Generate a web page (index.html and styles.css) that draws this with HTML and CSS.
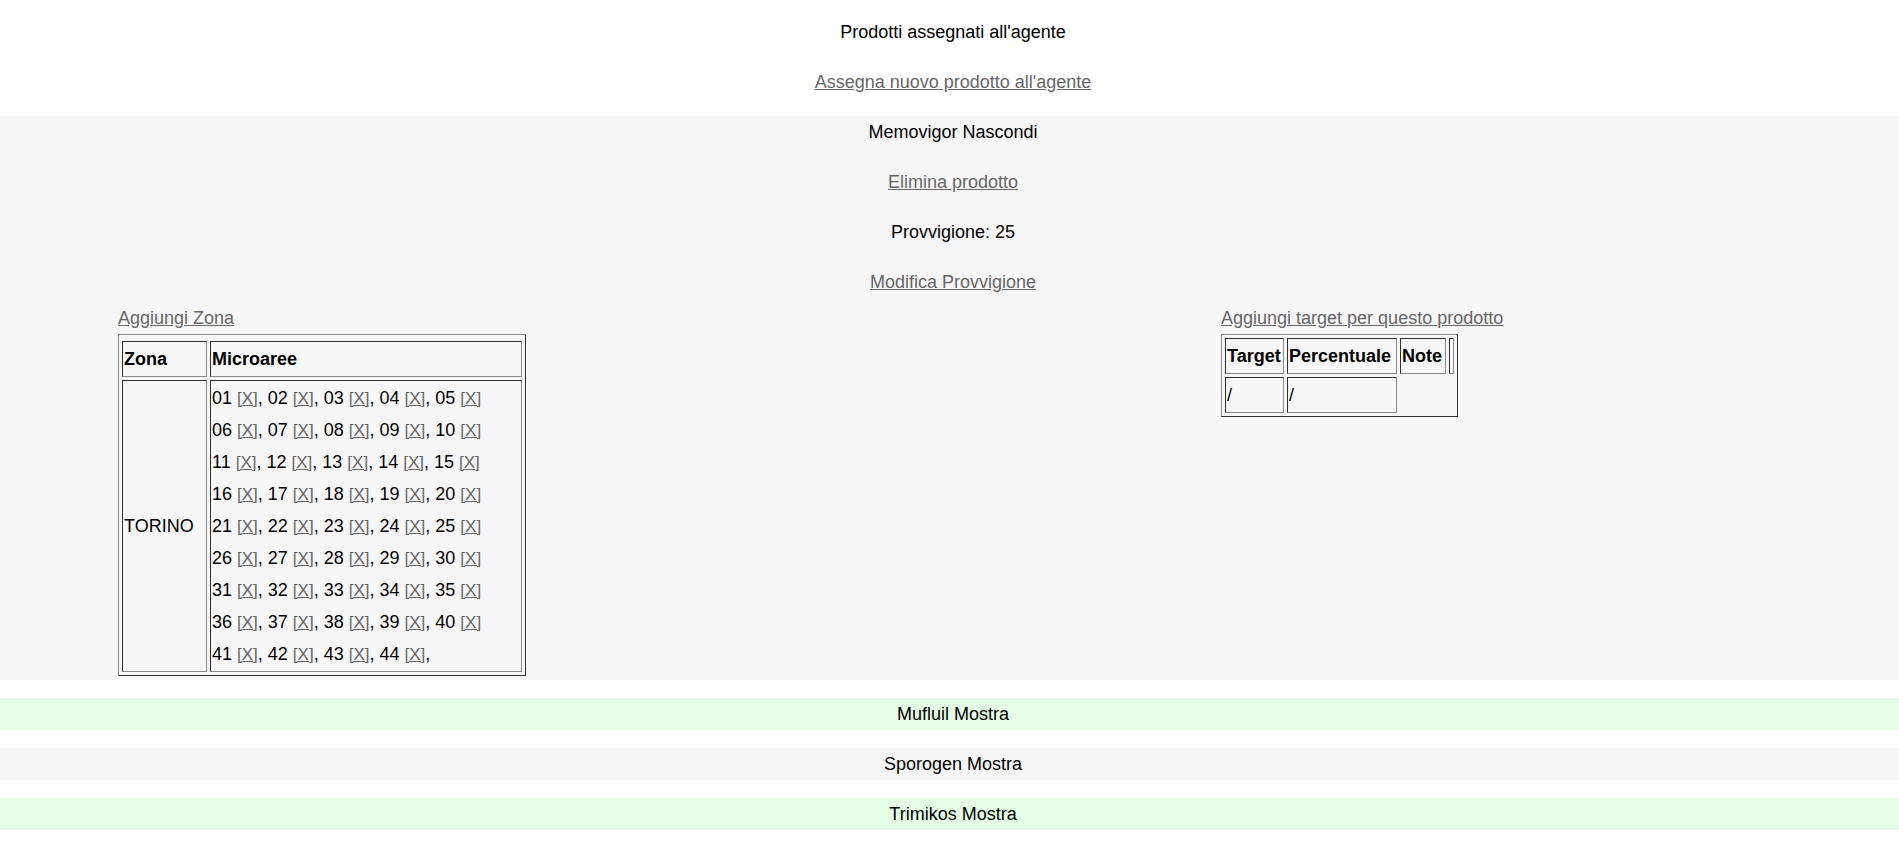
FILE: index.html
```html
<!DOCTYPE html>
<html lang="it">
<head>
<meta charset="utf-8">
<title>Prodotti assegnati all'agente</title>
<link rel="stylesheet" href="styles.css">
</head>
<body>
<div class="page">
  <p class="line first">Prodotti assegnati all'agente</p>
  <p class="line"><a href="#">Assegna nuovo prodotto all'agente</a></p>

  <section class="product open">
    <div class="title">Memovigor <span class="toggle">Nascondi</span></div>
    <div class="details">
      <p class="line"><a href="#">Elimina prodotto</a></p>
      <p class="line">Provvigione: 25</p>
      <p class="line"><a href="#">Modifica Provvigione</a></p>
      <div class="blocks">
        <div class="block-left">
          <div class="block-link"><a href="#">Aggiungi Zona</a></div>
          <table class="grid zones">
            <tr>
              <th class="c-zona">Zona</th>
              <th class="c-micro">Microaree</th>
            </tr>
            <tr>
              <td class="c-zona">TORINO</td>
              <td class="c-micro">01 <a class="del" href="#">[X]</a>, 02 <a class="del" href="#">[X]</a>, 03 <a class="del" href="#">[X]</a>, 04 <a class="del" href="#">[X]</a>, 05 <a class="del" href="#">[X]</a><br>06 <a class="del" href="#">[X]</a>, 07 <a class="del" href="#">[X]</a>, 08 <a class="del" href="#">[X]</a>, 09 <a class="del" href="#">[X]</a>, 10 <a class="del" href="#">[X]</a><br>11 <a class="del" href="#">[X]</a>, 12 <a class="del" href="#">[X]</a>, 13 <a class="del" href="#">[X]</a>, 14 <a class="del" href="#">[X]</a>, 15 <a class="del" href="#">[X]</a><br>16 <a class="del" href="#">[X]</a>, 17 <a class="del" href="#">[X]</a>, 18 <a class="del" href="#">[X]</a>, 19 <a class="del" href="#">[X]</a>, 20 <a class="del" href="#">[X]</a><br>21 <a class="del" href="#">[X]</a>, 22 <a class="del" href="#">[X]</a>, 23 <a class="del" href="#">[X]</a>, 24 <a class="del" href="#">[X]</a>, 25 <a class="del" href="#">[X]</a><br>26 <a class="del" href="#">[X]</a>, 27 <a class="del" href="#">[X]</a>, 28 <a class="del" href="#">[X]</a>, 29 <a class="del" href="#">[X]</a>, 30 <a class="del" href="#">[X]</a><br>31 <a class="del" href="#">[X]</a>, 32 <a class="del" href="#">[X]</a>, 33 <a class="del" href="#">[X]</a>, 34 <a class="del" href="#">[X]</a>, 35 <a class="del" href="#">[X]</a><br>36 <a class="del" href="#">[X]</a>, 37 <a class="del" href="#">[X]</a>, 38 <a class="del" href="#">[X]</a>, 39 <a class="del" href="#">[X]</a>, 40 <a class="del" href="#">[X]</a><br>41 <a class="del" href="#">[X]</a>, 42 <a class="del" href="#">[X]</a>, 43 <a class="del" href="#">[X]</a>, 44 <a class="del" href="#">[X]</a>,</td>
            </tr>
          </table>
        </div>
        <div class="block-right">
          <div class="block-link"><a href="#">Aggiungi target per questo prodotto</a></div>
          <table class="grid targets">
            <tr>
              <th class="t-target">Target</th>
              <th class="t-perc">Percentuale</th>
              <th class="t-note">Note</th>
              <th class="t-empty"></th>
            </tr>
            <tr>
              <td>/</td>
              <td>/</td>
            </tr>
          </table>
        </div>
      </div>
    </div>
  </section>

  <section class="product green">
    <div class="title">Mufluil <span class="toggle">Mostra</span></div>
  </section>
  <section class="product gray">
    <div class="title">Sporogen <span class="toggle">Mostra</span></div>
  </section>
  <section class="product green">
    <div class="title">Trimikos <span class="toggle">Mostra</span></div>
  </section>
</div>
</body>
</html>
```
FILE: styles.css
```css
html, body {
  margin: 0;
  padding: 0;
  background: #ffffff;
}

body {
  font-family: "Liberation Sans", Arial, sans-serif;
  font-size: 18px;
  line-height: 32px;
  color: #000000;
}

a {
  color: #666666;
  text-decoration: underline;
}

.page {
  display: flex;
  flex-direction: column;
  gap: 18px;
  padding-top: 16px;
}

.line {
  margin: 0;
  padding-left: 7px;
  text-align: center;
}

.product {
  display: flex;
  flex-direction: column;
}

.product.open,
.product.gray {
  background: #f7f7f7;
}

.product.green {
  background: #e5fde5;
}

.title {
  text-align: center;
  height: 32px;
  padding-left: 7px;
}

.toggle {
  cursor: pointer;
}

.details {
  display: flex;
  flex-direction: column;
  gap: 18px;
  padding-top: 18px;
  padding-bottom: 4px;
}

.blocks {
  display: flex;
  padding-left: 118px;
  margin-top: -14px;
}

.block-left {
  width: 1103px;
}

.block-link {
  height: 32px;
}

.grid {
  border-collapse: separate;
  border-spacing: 3px;
  border-width: 1px;
  border-style: solid;
  border-color: #8a8a8a #2e2e2e #2e2e2e #8a8a8a;
}

.grid th,
.grid td {
  padding: 1px;
  border-width: 1px;
  border-style: solid;
  border-color: #2e2e2e #8a8a8a #8a8a8a #2e2e2e;
  text-align: left;
  vertical-align: middle;
  font-size: 18px;
  line-height: 32px;
}

.grid th {
  font-weight: bold;
}

.del {
  font-size: 17px;
  line-height: 1;
}

.zones {
  width: 408px;
  padding-top: 3px;
}

.zones .c-zona {
  width: 81px;
}

.zones .c-micro {
  width: 308px;
}

.targets .t-target {
  width: 55px;
}

.targets .t-perc {
  width: 106px;
}

.targets .t-note {
  width: 42px;
}

.targets .t-empty {
  width: 0;
  padding: 1px 1px 1px 2px;
}
```
